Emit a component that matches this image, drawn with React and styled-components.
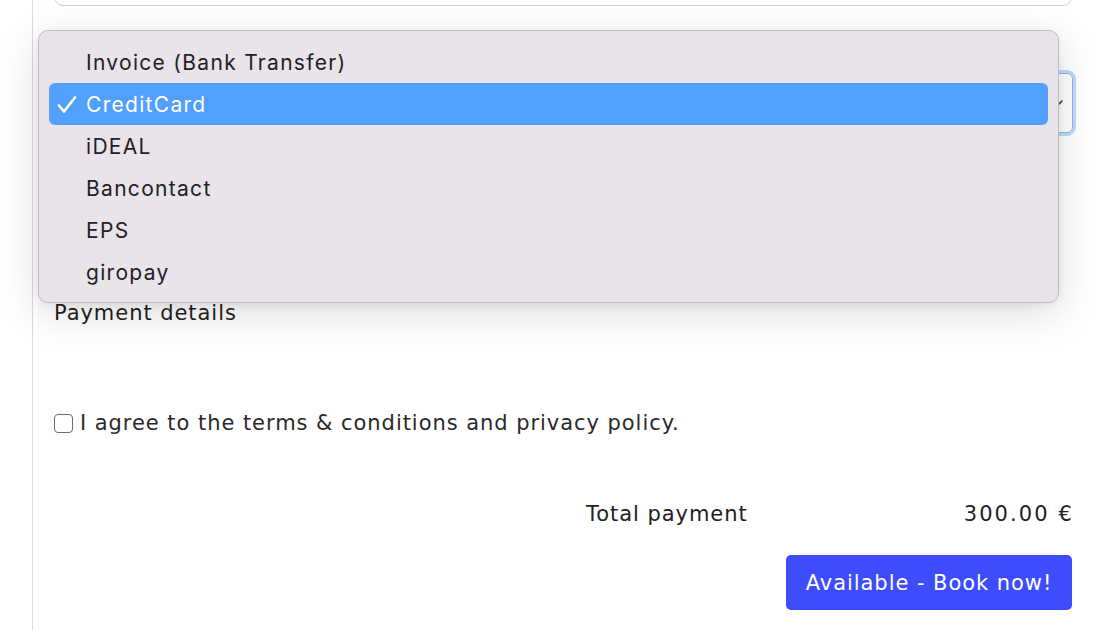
import React from "react";
import styled, { createGlobalStyle } from "styled-components";

const Global = createGlobalStyle`
  html, body { margin: 0; padding: 0; background: #fff; }
  body { font-family: "DejaVu Sans", "Liberation Sans", sans-serif; color: #222; overflow: hidden; letter-spacing: 0.95px; }
  * { box-sizing: border-box; }
`;

const Stage = styled.div`
  position: relative;
  width: 1094px;
  height: 630px;
  overflow: hidden;
`;

const Panel = styled.main`
  margin-left: 32px;
  height: 630px;
  border-left: 1px solid #dcdcdc;
  padding: 0 22px 0 21px;
  display: flex;
  flex-direction: column;
`;

const TopInput = styled.div`
  margin-top: -40px;
  height: 46px;
  border: 1px solid #d2d0d6;
  border-radius: 9px;
  background: #fff;
`;

const SelectBox = styled.div`
  margin-top: 67px;
  margin-right: -1px;
  height: 60px;
  border: 1px solid #8ab4f0;
  border-radius: 6px;
  box-shadow: 0 0 0 3px #c3d8f6;
  display: flex;
  align-items: center;
  justify-content: flex-end;
  padding-right: 9px;
  color: #444;
`;

const Label = styled.div`
  margin-top: 169px;
  font-size: 21px;
  line-height: 22px;
  color: #222;
`;

const AgreeRow = styled.label`
  margin-top: 87px;
  display: flex;
  align-items: center;
  gap: 7px;
  font-size: 21px;
  line-height: 24px;
  color: #2a2a2a;
`;

const Check = styled.span`
  width: 19px;
  height: 19px;
  border: 1.5px solid #6d6d6d;
  border-radius: 4px;
  background: #fff;
  flex: none;
`;

const TotalRow = styled.div`
  margin-top: 67px;
  display: grid;
  grid-template-columns: 1fr auto;
  font-size: 21px;
  line-height: 24px;
  color: #222;
`;

const TotalLabel = styled.span`
  padding-left: 532px;
`;

const Amount = styled.span`
  letter-spacing: 2.1px;
  margin-right: -2px;
`;

const ButtonRow = styled.div`
  margin-top: 29px;
  display: flex;
  justify-content: flex-end;
`;

const BookButton = styled.button`
  height: 55px;
  width: 286px;
  border: none;
  border-radius: 5px;
  background: #3d4cfd;
  color: #fff;
  font-family: inherit;
  font-size: 21px;
  letter-spacing: 0.95px;
  padding: 0;
`;

const Menu = styled.ul`
  position: absolute;
  left: 38px;
  top: 30px;
  width: 1021px;
  height: 273px;
  margin: 0;
  padding: 10px 10px;
  list-style: none;
  background: #e9e3ea;
  border: 1px solid #bfbbc1;
  border-radius: 10px;
  box-shadow: 0 10px 40px rgba(0, 0, 0, 0.14), 0 2px 8px rgba(0, 0, 0, 0.06);
  font-family: Inter, "Noto Sans", sans-serif;
`;

const Item = styled.li`
  height: 42px;
  display: flex;
  align-items: center;
  border-radius: 6px;
  font-size: 21px;
  letter-spacing: 1.3px;
  color: ${(p) => (p.$selected ? "#fff" : "#232125")};
  background: ${(p) => (p.$selected ? "#539ffe" : "transparent")};
`;

const Tick = styled.span`
  width: 37px;
  padding-left: 8px;
  display: flex;
  align-items: center;
`;

const options = ["Invoice (Bank Transfer)", "CreditCard", "iDEAL", "Bancontact", "EPS", "giropay"];

export default function App() {
  return (
    <Stage>
      <Global />
      <Panel>
        <TopInput />
        <SelectBox>
          <svg width="10" height="6" viewBox="0 0 10 6" fill="none" stroke="#3a3a3a" strokeWidth="1.6" strokeLinecap="round">
            <path d="M1 1l4 4 4-4" />
          </svg>
        </SelectBox>
        <Label>Payment details</Label>
        <AgreeRow>
          <Check />
          I agree to the terms &amp; conditions and privacy policy.
        </AgreeRow>
        <TotalRow>
          <TotalLabel>Total payment</TotalLabel>
          <Amount>300.00 €</Amount>
        </TotalRow>
        <ButtonRow>
          <BookButton>Available - Book now!</BookButton>
        </ButtonRow>
      </Panel>
      <Menu>
        {options.map((o) => (
          <Item key={o} $selected={o === "CreditCard"}>
            <Tick>
              {o === "CreditCard" && (
                <svg width="20" height="17" viewBox="0 0 20 17" fill="none" stroke="#fff" strokeWidth="2.6" strokeLinecap="round" strokeLinejoin="round">
                  <path d="M2 9.5l5 6L18 1.5" />
                </svg>
              )}
            </Tick>
            {o}
          </Item>
        ))}
      </Menu>
    </Stage>
  );
}
